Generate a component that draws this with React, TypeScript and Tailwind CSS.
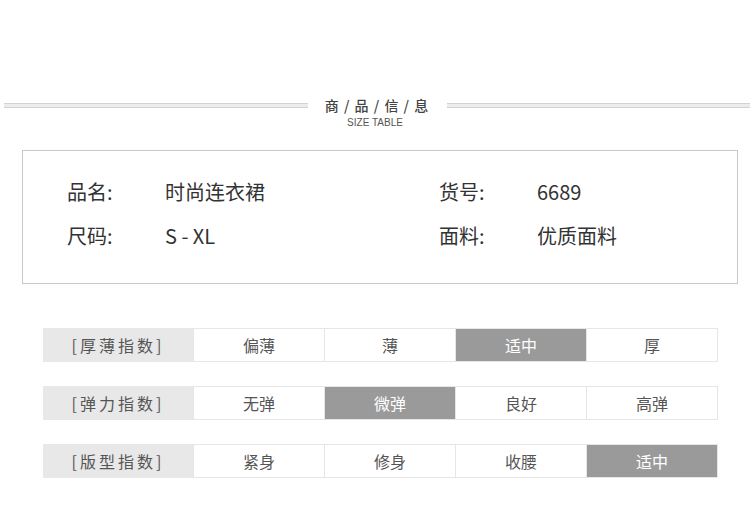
import React from 'react';

const FONT = { fontFamily: '"Noto Sans CJK SC", "Liberation Sans", sans-serif' };

const INFO = [
  [
    { label: '品名:', value: '时尚连衣裙' },
    { label: '货号:', value: '6689' },
  ],
  [
    { label: '尺码:', value: 'S - XL' },
    { label: '面料:', value: '优质面料' },
  ],
];

const INDEXES = [
  { name: '[厚薄指数]', options: ['偏薄', '薄', '适中', '厚'], active: 2 },
  { name: '[弹力指数]', options: ['无弹', '微弹', '良好', '高弹'], active: 1 },
  { name: '[版型指数]', options: ['紧身', '修身', '收腰', '适中'], active: 3 },
];

function Rule() {
  return <div className="flex-1 h-[5px] border-t border-b border-[#d2d2d2] bg-[#ececec]" />;
}

export default function App() {
  return (
    <div className="w-[750px] h-[519px] bg-white text-[#333]" style={FONT}>
      {/* Title */}
      <div className="pt-[94px] flex items-start">
        <div className="flex items-center w-full h-[22px]">
          <div className="w-[4px]" />
          <Rule />
          <div className="w-[139px] text-center text-[14px] font-medium text-[#444] tracking-[1px]">
            商 / 品 / 信 / 息
          </div>
          <Rule />
        </div>
      </div>
      <div
        className="text-center text-[10px] text-[#555] leading-[12px] mt-[1px]"
        style={{ fontFamily: '"Liberation Sans", sans-serif' }}
      >
        SIZE TABLE
      </div>

      {/* Info box */}
      <div className="mt-[21px] ml-[22px] w-[716px] h-[134px] border border-[#c8c8c8] pt-[19px]">
        {INFO.map((row, i) => (
          <div key={i} className="flex h-[44px] items-center text-[20px]">
            {row.map((cell, j) => (
              <div key={j} className={`flex ${j === 0 ? 'w-[372px] pl-[44px]' : 'flex-1 pl-[44px]'}`}>
                <div className="w-[98px]">{cell.label}</div>
                <div>{cell.value}</div>
              </div>
            ))}
          </div>
        ))}
      </div>

      {/* Index table */}
      <div className="mt-[44px] ml-[43px] flex flex-col gap-[24px]">
        {INDEXES.map((idx) => (
          <div key={idx.name} className="flex h-[34px] w-[675px] text-[16px]">
            <div className="w-[150px] bg-[#e8e8e8] text-[#555] flex items-center justify-center tracking-[3px]">
              {idx.name}
            </div>
            {idx.options.map((opt, k) => (
              <div
                key={opt + k}
                className={`flex-1 flex items-center justify-center border border-[#e6e6e6] ${k > 0 ? 'border-l-0' : ''} ${
                  k === idx.active ? 'bg-[#9a9a9a] text-white border-[#9a9a9a]' : 'bg-white text-[#555]'
                }`}
              >
                {opt}
              </div>
            ))}
          </div>
        ))}
      </div>
    </div>
  );
}
